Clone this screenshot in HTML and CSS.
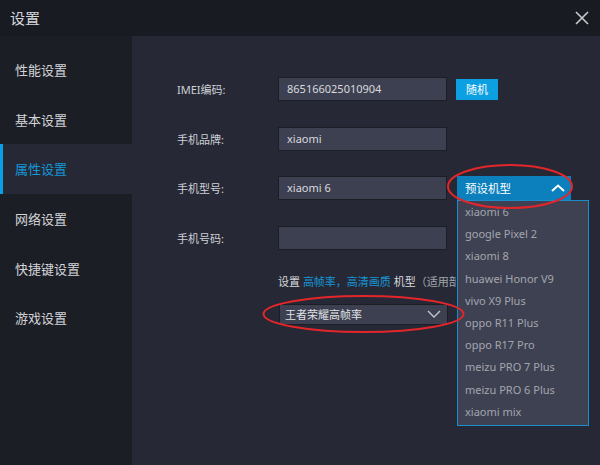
FILE: index.html
```html
<!DOCTYPE html>
<html lang="zh-CN">
<head>
<meta charset="utf-8">
<title>设置</title>
<link rel="stylesheet" href="styles.css">
</head>
<body>
<div class="window">
  <header class="titlebar">
    <span class="title">设置</span>
    <span class="close">
      <svg width="14" height="14" viewBox="0 0 14 14"><path d="M1 1 L13 13 M13 1 L1 13" stroke="#c9cacd" stroke-width="1.6" fill="none"/></svg>
    </span>
  </header>
  <div class="main">
    <nav class="sidebar">
      <div class="nav-item">性能设置</div>
      <div class="nav-item">基本设置</div>
      <div class="nav-item active">属性设置</div>
      <div class="nav-item">网络设置</div>
      <div class="nav-item">快捷键设置</div>
      <div class="nav-item">游戏设置</div>
    </nav>
    <section class="content">
      <div class="row">
        <span class="label">IMEI编码:</span>
        <div class="input">865166025010904</div>
        <button class="btn-random">随机</button>
      </div>
      <div class="row">
        <span class="label">手机品牌:</span>
        <div class="input">xiaomi</div>
      </div>
      <div class="row">
        <span class="label">手机型号:</span>
        <div class="input">xiaomi 6</div>
        <div class="picker">
          <div class="picker-btn">
            <span>预设机型</span>
            <svg width="14" height="8" viewBox="0 0 14 8"><path d="M1 7 L7 1.5 L13 7" stroke="#ffffff" stroke-width="2" fill="none"/></svg>
          </div>
          <ul class="picker-list">
            <li>xiaomi 6</li>
            <li>google Pixel 2</li>
            <li>xiaomi 8</li>
            <li>huawei Honor V9</li>
            <li>vivo X9 Plus</li>
            <li>oppo R11 Plus</li>
            <li>oppo R17 Pro</li>
            <li>meizu PRO 7 Plus</li>
            <li>meizu PRO 6 Plus</li>
            <li>xiaomi mix</li>
          </ul>
        </div>
      </div>
      <div class="row">
        <span class="label">手机号码:</span>
        <div class="input"></div>
      </div>
      <div class="hint">设置 <span class="hl">高帧率，高清画质</span> 机型<span class="muted">（适用部分游戏）</span></div>
      <div class="select">
        <span>王者荣耀高帧率</span>
        <svg width="14" height="8" viewBox="0 0 14 8"><path d="M1 1 L7 7 L13 1" stroke="#c4c6cc" stroke-width="1.4" fill="none"/></svg>
      </div>
    </section>
  </div>
  <svg class="annot" width="600" height="465" viewBox="0 0 600 465">
    <ellipse cx="510" cy="186.5" rx="62" ry="21.5" fill="none" stroke="#e3262a" stroke-width="2"/>
    <ellipse cx="363.5" cy="314" rx="100" ry="18" fill="none" stroke="#e3262a" stroke-width="2"/>
  </svg>
</div>
</body>
</html>
```

FILE: styles.css
```css
* { box-sizing: border-box; }
html, body { margin: 0; padding: 0; }
body {
  width: 600px;
  height: 465px;
  overflow: hidden;
  background: #262935;
  font-family: "Noto Sans", "Noto Sans CJK SC", sans-serif;
}
.window {
  position: relative;
  width: 600px;
  height: 465px;
  display: flex;
  flex-direction: column;
}
.titlebar {
  height: 36px;
  flex: none;
  background: #191b22;
  display: flex;
  align-items: center;
  justify-content: space-between;
  padding: 0 10px 0 10px;
}
.title {
  color: #d4d6da;
  font-size: 15px;
  line-height: 1;
  margin-top: 1px;
}
.close {
  display: flex;
  width: 14px;
  height: 14px;
  margin-right: 1px;
}
.main {
  flex: 1;
  display: flex;
}
.sidebar {
  width: 132px;
  flex: none;
  background: #1c1e25;
  padding-top: 9px;
}
.nav-item {
  height: 49.6px;
  display: flex;
  align-items: center;
  padding-left: 15px;
  font-size: 13px;
  color: #d2d4d8;
}
.nav-item.active {
  background: #262935;
  border-left: 3px solid #0aa0e6;
  padding-left: 12px;
  color: #1596d6;
}
.content {
  flex: 1;
  background: #262935;
  padding: 41px 0 0 45px;
  display: flex;
  flex-direction: column;
  font-size: 11px;
}
.row {
  display: flex;
  align-items: center;
  height: 24px;
  margin-bottom: 25.5px;
}
.label {
  width: 101px;
  flex: none;
  color: #cdd0d5;
  font-size: 11px;
}
.input {
  width: 169px;
  height: 24px;
  background: #3d4051;
  border: 1px solid #1c1e26;
  color: #d9dadd;
  font-size: 11px;
  line-height: 22px;
  padding-left: 8px;
}
.btn-random {
  margin-left: 9px;
  width: 42px;
  height: 21px;
  border: none;
  background: #0c9fe2;
  color: #ffffff;
  font-family: inherit;
  font-size: 11px;
  padding: 0;
}
.picker {
  position: relative;
  margin-left: 10px;
  z-index: 2;
}
.picker-btn {
  width: 114px;
  height: 24px;
  background: #0b80bd;
  color: #ffffff;
  font-size: 11.5px;
  display: flex;
  align-items: center;
  justify-content: space-between;
  padding: 0 6px 0 8px;
}
.picker-list {
  position: absolute;
  top: 24px;
  left: 0;
  width: 132px;
  margin: 0;
  padding: 0 0 2px 0;
  list-style: none;
  background: #3e4152;
  border: 1px solid #1a8dcc;
}
.picker-list li {
  height: 22.2px;
  line-height: 22px;
  padding-left: 7px;
  color: #a3a6ae;
  font-size: 11px;
  white-space: nowrap;
}
.hint {
  margin-left: 101px;
  margin-top: -1.5px;
  width: 178px;
  overflow: hidden;
  height: 16px;
  line-height: 16px;
  color: #d6d8dc;
  font-size: 11px;
  white-space: nowrap;
}
.hl { color: #1596d6; }
.muted { color: #a3a6ae; }
.select {
  margin-left: 102px;
  margin-top: 14px;
  width: 169px;
  height: 21px;
  background: #3d4051;
  border: 1px solid #1c1e26;
  display: flex;
  align-items: center;
  justify-content: space-between;
  padding: 0 6px 0 5px;
  color: #e0e1e4;
  font-size: 11px;
}
.annot {
  position: absolute;
  left: 0;
  top: 0;
  pointer-events: none;
  z-index: 5;
}
```
